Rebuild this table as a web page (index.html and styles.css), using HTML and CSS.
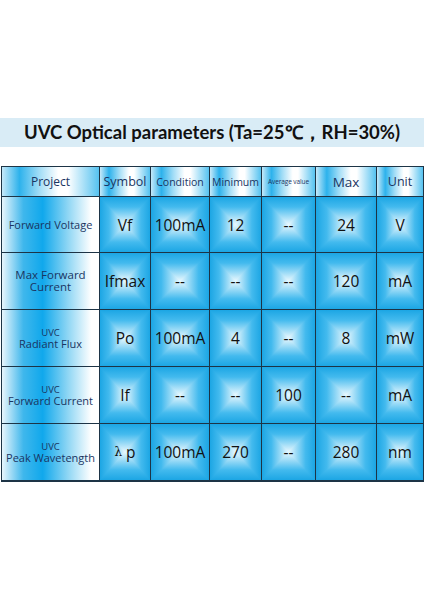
FILE: index.html
```html
<!DOCTYPE html>
<html>
<head>
<meta charset="utf-8">
<link rel="stylesheet" href="styles.css">
</head>
<body>
<div class="page">
  <div class="title">UVC Optical parameters (Ta=25℃，RH=30%)</div>
  <div class="grid">
    <div class="hd">Project</div>
    <div class="hd sym">Symbol</div>
    <div class="hd cond">Condition</div>
    <div class="hd minh">Minimum</div>
    <div class="hd avg">Average value</div>
    <div class="hd maxh">Max</div>
    <div class="hd unit">Unit</div>

    <div class="name">Forward Voltage</div>
    <div class="c">Vf</div>
    <div class="c">100mA</div>
    <div class="c">12</div>
    <div class="c">--</div>
    <div class="c">24</div>
    <div class="c">V</div>

    <div class="name big">Max Forward<br>Current</div>
    <div class="c">Ifmax</div>
    <div class="c">--</div>
    <div class="c">--</div>
    <div class="c">--</div>
    <div class="c">120</div>
    <div class="c">mA</div>

    <div class="name"><span class="uvc">UVC</span><span>Radiant Flux</span></div>
    <div class="c">Po</div>
    <div class="c">100mA</div>
    <div class="c">4</div>
    <div class="c">--</div>
    <div class="c">8</div>
    <div class="c">mW</div>

    <div class="name"><span class="uvc">UVC</span><span>Forward Current</span></div>
    <div class="c">If</div>
    <div class="c">--</div>
    <div class="c">--</div>
    <div class="c">100</div>
    <div class="c">--</div>
    <div class="c">mA</div>

    <div class="name"><span class="uvc">UVC</span><span>Peak Wavetength</span></div>
    <div class="c"><span class="lam">λ</span>&nbsp;p</div>
    <div class="c">100mA</div>
    <div class="c">270</div>
    <div class="c">--</div>
    <div class="c">280</div>
    <div class="c">nm</div>
  </div>
</div>
</body>
</html>
```
FILE: styles.css
```css
html, body {
  margin: 0;
  padding: 0;
  background: #ffffff;
}
.page {
  width: 424px;
  padding-top: 118px;
  font-family: "Open Sans", "Noto Sans", sans-serif;
}
.title {
  height: 29px;
  background: #d9ecf6;
  color: #111111;
  font-family: Lato, "Open Sans", sans-serif;
  font-weight: 700;
  font-size: 18.5px;
  line-height: 29px;
  text-align: center;
}
.grid {
  margin: 19px 0 0 1px;
  width: 421px;
  display: grid;
  grid-template-columns: 97px 50px 58px 51px 53px 60px 46px;
  grid-template-rows: 29px 55px 56px 56px 56px 56px;
  gap: 1px;
  padding: 1px 1px 2px 1px;
  background: #1d3446;
}
.grid > div {
  display: flex;
  align-items: center;
  justify-content: center;
  text-align: center;
}
.hd {
  background: linear-gradient(to right, #c6e9f9 0%, #2db2ec 18%, #9fdcf6 38%, #ffffff 58%, #ffffff 68%, #55c2f0 100%);
  color: #1a3562;
  font-size: 12px;
}
.hd.sym { font-size: 12.5px; }
.hd.cond { font-size: 10.5px; }
.hd.minh { font-size: 10.5px; }
.hd.avg { font-size: 6.5px; letter-spacing: -0.1px; }
.hd.maxh { font-size: 13.5px; }
.hd.unit { font-size: 12.5px; }
.name {
  flex-direction: column;
  background: linear-gradient(to right, #e9f6fc 0%, #3fb7ec 22%, #10a8ec 42%, #8fd6f4 68%, #ffffff 92%);
  color: #1a3562;
  font-size: 11px;
  line-height: 12px;
}
.name.big { font-size: 11.5px; line-height: 12px; }
.uvc {
  font-size: 9.5px;
  line-height: 11px;
}
.c {
  background:
    linear-gradient(to right, #1ca6e4 0%, #43baee 18%, #e9f8fe 50%, #43baee 82%, #1ca6e4 100%),
    linear-gradient(to bottom, #1ca6e4 0%, #43baee 18%, #e9f8fe 50%, #43baee 82%, #1ca6e4 100%);
  background-blend-mode: darken;
  color: #111111;
  font-size: 15.5px;
}
.lam {
  font-family: "DejaVu Serif", serif;
  font-size: 12px;
}
```
